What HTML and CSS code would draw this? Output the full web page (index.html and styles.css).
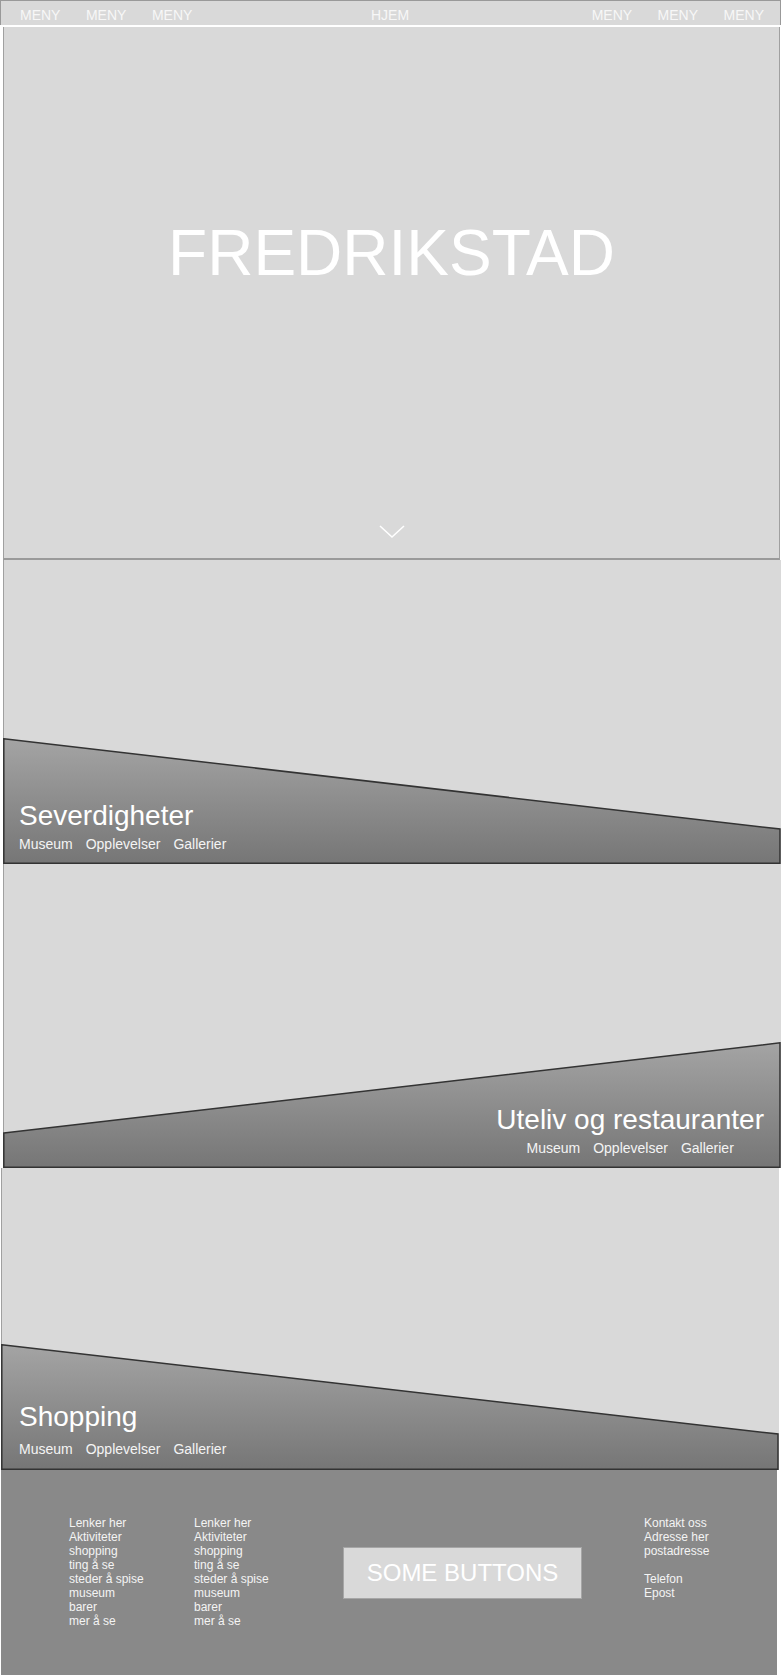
FILE: index.html
```html
<!DOCTYPE html>
<html lang="no">
<head>
<meta charset="utf-8">
<title>Fredrikstad</title>
<link rel="stylesheet" href="styles.css">
</head>
<body>
<header class="topnav">
  <nav class="topnav-group topnav-left">
    <a class="topnav-link" href="#">MENY</a>
    <a class="topnav-link" href="#">MENY</a>
    <a class="topnav-link" href="#">MENY</a>
  </nav>
  <a class="topnav-link topnav-home" href="#">HJEM</a>
  <nav class="topnav-group topnav-right">
    <a class="topnav-link" href="#">MENY</a>
    <a class="topnav-link" href="#">MENY</a>
    <a class="topnav-link" href="#">MENY</a>
  </nav>
</header>

<section class="hero">
  <h1 class="hero-title">FREDRIKSTAD</h1>
  <svg class="hero-chevron" width="26" height="14" viewBox="0 0 26 14" aria-hidden="true">
    <polyline points="1,1 13,12 25,1" fill="none" stroke="#ffffff" stroke-width="1.6"/>
  </svg>
</section>

<section class="feature feature-one">
  <svg class="band" width="778" height="126" viewBox="0 0 778 126" aria-hidden="true">
    <defs>
      <linearGradient id="bandA" x1="0" y1="0" x2="0" y2="1">
        <stop offset="0" stop-color="#a4a4a4"/>
        <stop offset="1" stop-color="#767676"/>
      </linearGradient>
    </defs>
    <polygon points="0.8,0.8 777,91 777,125.2 0.8,125.2" fill="url(#bandA)" stroke="#333333" stroke-width="1.5"/>
  </svg>
  <div class="feature-text">
    <h2 class="feature-title">Severdigheter</h2>
    <div class="feature-links">
      <a href="#">Museum</a><a href="#">Opplevelser</a><a href="#">Gallerier</a>
    </div>
  </div>
</section>

<section class="feature feature-two">
  <svg class="band" width="778" height="126" viewBox="0 0 778 126" aria-hidden="true">
    <defs>
      <linearGradient id="bandB" x1="0" y1="0" x2="0" y2="1">
        <stop offset="0" stop-color="#a4a4a4"/>
        <stop offset="1" stop-color="#767676"/>
      </linearGradient>
    </defs>
    <polygon points="0.8,91 777,0.8 777,125.2 0.8,125.2" fill="url(#bandB)" stroke="#333333" stroke-width="1.5"/>
  </svg>
  <div class="feature-text feature-text-right">
    <h2 class="feature-title">Uteliv og restauranter</h2>
    <div class="feature-links">
      <a href="#">Museum</a><a href="#">Opplevelser</a><a href="#">Gallerier</a>
    </div>
  </div>
</section>

<section class="feature feature-three">
  <svg class="band" width="778" height="126" viewBox="0 0 778 126" aria-hidden="true">
    <defs>
      <linearGradient id="bandC" x1="0" y1="0" x2="0" y2="1">
        <stop offset="0" stop-color="#a4a4a4"/>
        <stop offset="1" stop-color="#767676"/>
      </linearGradient>
    </defs>
    <polygon points="0.8,0.8 777,90 777,125.2 0.8,125.2" fill="url(#bandC)" stroke="#333333" stroke-width="1.5"/>
  </svg>
  <div class="feature-text">
    <h2 class="feature-title">Shopping</h2>
    <div class="feature-links">
      <a href="#">Museum</a><a href="#">Opplevelser</a><a href="#">Gallerier</a>
    </div>
  </div>
</section>

<footer class="footer">
  <ul class="footer-list">
    <li>Lenker her</li>
    <li>Aktiviteter</li>
    <li>shopping</li>
    <li>ting å se</li>
    <li>steder å spise</li>
    <li>museum</li>
    <li>barer</li>
    <li>mer å se</li>
  </ul>
  <ul class="footer-list">
    <li>Lenker her</li>
    <li>Aktiviteter</li>
    <li>shopping</li>
    <li>ting å se</li>
    <li>steder å spise</li>
    <li>museum</li>
    <li>barer</li>
    <li>mer å se</li>
  </ul>
  <button class="footer-button" type="button">SOME BUTTONS</button>
  <ul class="footer-list footer-contact">
    <li>Kontakt oss</li>
    <li>Adresse her</li>
    <li>postadresse</li>
    <li class="footer-gap"></li>
    <li>Telefon</li>
    <li>Epost</li>
  </ul>
</footer>
</body>
</html>
```

FILE: styles.css
```css
* {
  box-sizing: border-box;
}

html, body {
  margin: 0;
  padding: 0;
  background: #ffffff;
}

body {
  width: 781px;
  font-family: "Liberation Sans", Arial, Helvetica, sans-serif;
  color: #ffffff;
}

a {
  color: inherit;
  text-decoration: none;
}

/* Top navigation */
.topnav {
  display: grid;
  grid-template-columns: 1fr auto 1fr;
  align-items: center;
  height: 25px;
  padding: 3px 16px 0 19px;
  background: #d9d9d9;
  border: 1px solid #999999;
  border-bottom: none;
  margin-bottom: 2px;
}

.topnav-group {
  display: flex;
  gap: 25.5px;
}

.topnav-right {
  justify-content: flex-end;
}

.topnav-link {
  font-size: 14px;
  line-height: 16px;
  color: #f7f7f7;
}

.topnav-home {
  margin-left: -4px;
}

/* Hero */
.hero {
  display: flex;
  flex-direction: column;
  align-items: center;
  height: 533px;
  margin-left: 3px;
  width: 777px;
  padding: 194px 0 19px;
  background: #d9d9d9;
  border-left: 1px solid #a0a0a0;
  border-right: 1px solid #a0a0a0;
  border-bottom: 2px solid #9a9a9a;
}

.hero-title {
  margin: 0;
  font-size: 64px;
  line-height: 64px;
  font-weight: normal;
  color: #ffffff;
  letter-spacing: 0;
}

.hero-chevron {
  display: block;
  margin-top: auto;
}

/* Feature sections */
.feature {
  position: relative;
  display: flex;
  flex-direction: column;
  justify-content: flex-end;
  width: 778px;
  height: 304px;
  margin-left: 3px;
  background: #d9d9d9;
  border-left: 1px solid #a0a0a0;
}

.feature-three {
  height: 302px;
  margin-left: 1px;
}

.band {
  position: absolute;
  left: -1px;
  bottom: 0;
  display: block;
}

.feature-text {
  position: relative;
  display: flex;
  flex-direction: column;
  align-items: flex-start;
  padding: 0 0 12px 15px;
}

.feature-text-right {
  align-self: flex-end;
  align-items: center;
  padding: 0 17px 12px 0;
}

.feature-three .feature-text {
  padding: 0 0 13px 17px;
}

.feature-title {
  margin: 0 0 6px;
  font-size: 28px;
  line-height: 28px;
  font-weight: normal;
  color: #ffffff;
}

.feature-three .feature-title {
  margin-bottom: 10px;
}

.feature-links {
  display: flex;
  gap: 13px;
  font-size: 14px;
  line-height: 16px;
  color: #f4f4f4;
}

/* Footer */
.footer {
  display: grid;
  grid-template-columns: 125px 149px 239px 1fr;
  align-items: start;
  width: 776px;
  height: 205px;
  margin-left: 1px;
  padding: 46px 0 0 68px;
  background: #898989;
}

.footer-list {
  margin: 0;
  padding: 0;
  list-style: none;
  font-size: 12px;
  line-height: 14px;
  color: #f4f4f4;
}

.footer-gap {
  height: 14px;
}

.footer-button {
  margin-top: 31px;
  height: 52px;
  padding: 0;
  background: #d9d9d9;
  border: 1px solid #a6a6a6;
  font-family: "Liberation Sans", Arial, Helvetica, sans-serif;
  font-size: 24px;
  color: #ffffff;
}

.footer-contact {
  margin-left: 62px;
}
```
